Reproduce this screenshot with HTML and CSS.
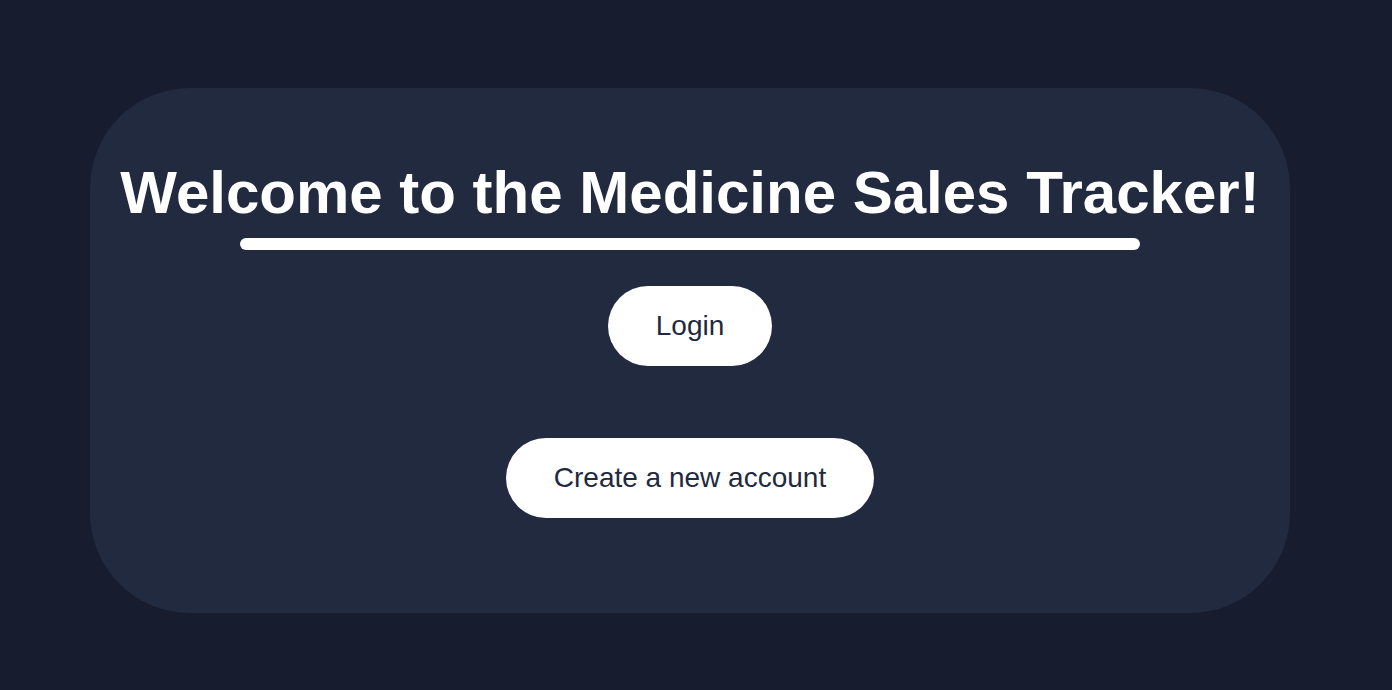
FILE: index.html
```html
<!DOCTYPE html>
<html lang="en">
<head>
<meta charset="utf-8">
<title>Medicine Sales Tracker</title>
<link rel="stylesheet" href="styles.css">
</head>
<body>
<main class="page">
  <section class="card">
    <h1 class="title">Welcome to the Medicine Sales Tracker!</h1>
    <div class="rule"></div>
    <div class="actions">
      <button class="btn">Login</button>
      <button class="btn">Create a new account</button>
    </div>
  </section>
</main>
</body>
</html>
```
FILE: styles.css
```css
html, body {
  margin: 0;
  padding: 0;
  background: #171c2f;
  font-family: "Liberation Sans", Arial, sans-serif;
}
.page {
  padding: 88px 0 0 90px;
  height: 690px;
  box-sizing: border-box;
}
.card {
  width: 1200px;
  box-sizing: border-box;
  background: #222a3f;
  border-radius: 100px;
  padding: 70px 0 95px;
  display: flex;
  flex-direction: column;
  align-items: center;
}
.title {
  margin: 0;
  color: #ffffff;
  font-size: 60px;
  font-weight: 700;
  line-height: 69px;
  white-space: nowrap;
}
.rule {
  width: 900px;
  height: 12px;
  margin-top: 11px;
  background: #ffffff;
  border-radius: 6px;
}
.actions {
  margin-top: 36px;
  display: flex;
  flex-direction: column;
  align-items: center;
  gap: 72px;
}
.btn {
  height: 80px;
  padding: 0 48px;
  border: none;
  border-radius: 40px;
  background: #ffffff;
  color: #1f2940;
  font-family: "Liberation Sans", Arial, sans-serif;
  font-size: 28px;
  cursor: pointer;
}
```
